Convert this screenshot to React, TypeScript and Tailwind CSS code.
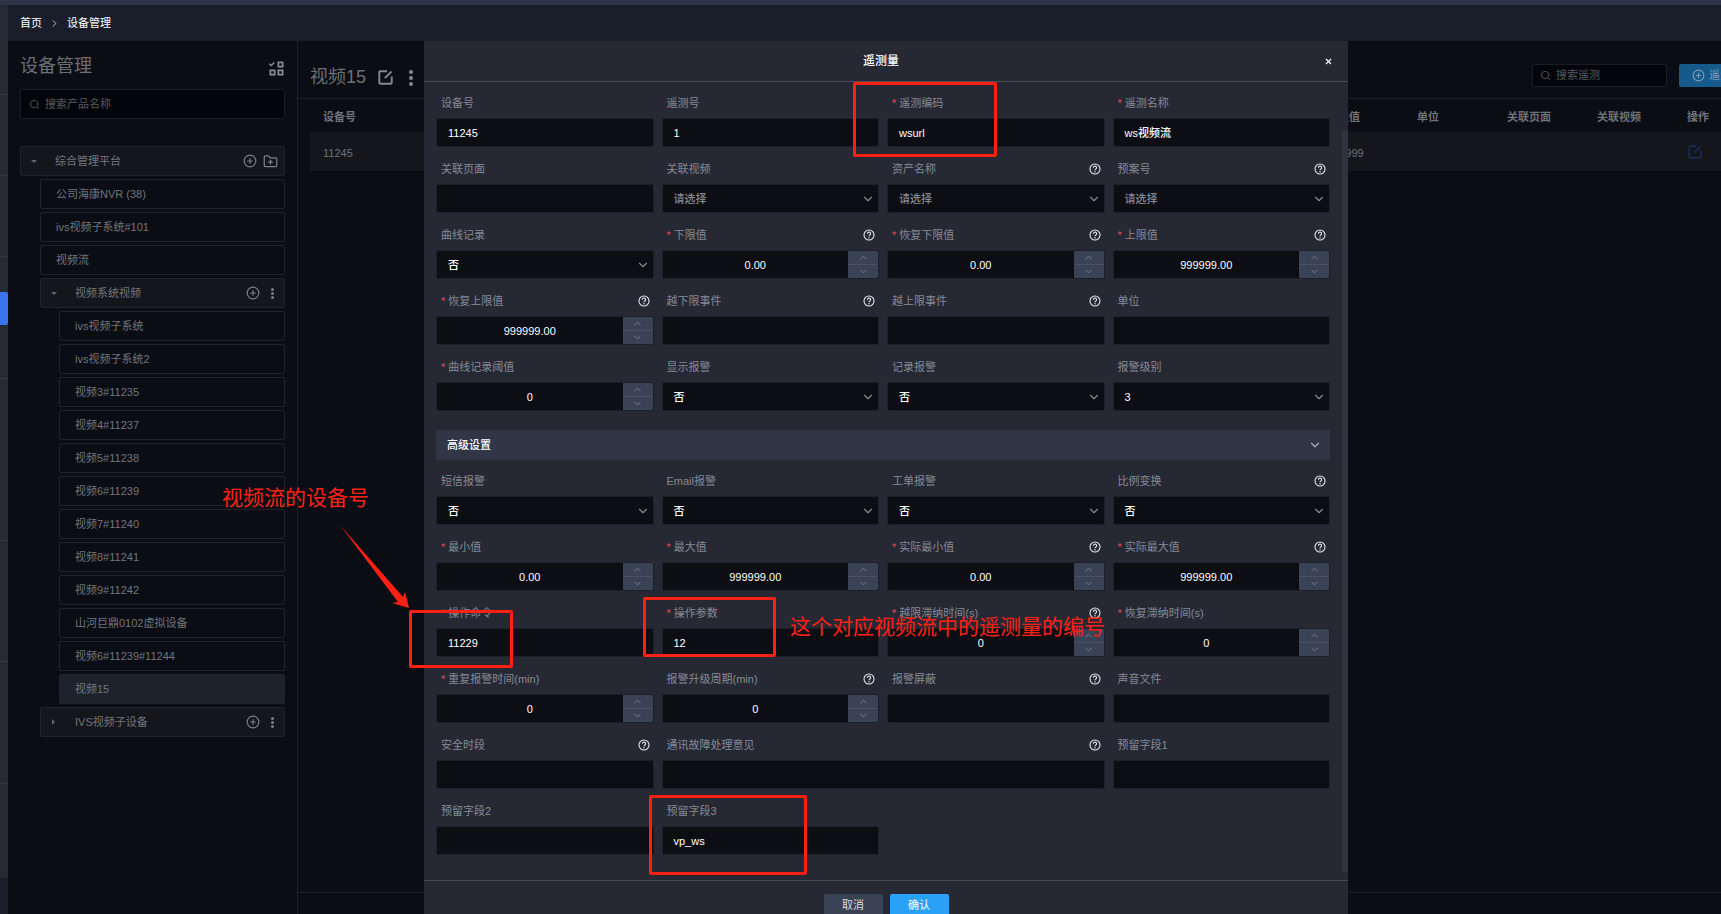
import { ChevronDown, ChevronUp, ChevronRight, CirclePlus, FolderPlus, Search, X } from 'lucide-react';

// Device management page, dimmed behind the telemetry dialog, with red review notes on top.

type Field = {
  label: string;
  req?: boolean;
  help?: boolean;
  kind?: 'input' | 'select' | 'number';
  value?: string;
  wide?: boolean;
};

const mainFields: Field[] = [
  { label: '设备号', value: '11245' },
  { label: '遥测号', value: '1' },
  { label: '遥测编码', req: true, value: 'wsurl' },
  { label: '遥测名称', req: true, value: 'ws视频流' },
  { label: '关联页面' },
  { label: '关联视频', kind: 'select' },
  { label: '资产名称', help: true, kind: 'select' },
  { label: '预案号', help: true, kind: 'select' },
  { label: '曲线记录', kind: 'select', value: '否' },
  { label: '下限值', req: true, help: true, kind: 'number', value: '0.00' },
  { label: '恢复下限值', req: true, help: true, kind: 'number', value: '0.00' },
  { label: '上限值', req: true, help: true, kind: 'number', value: '999999.00' },
  { label: '恢复上限值', req: true, help: true, kind: 'number', value: '999999.00' },
  { label: '越下限事件', help: true },
  { label: '越上限事件', help: true },
  { label: '单位' },
  { label: '曲线记录阈值', req: true, kind: 'number', value: '0' },
  { label: '显示报警', kind: 'select', value: '否' },
  { label: '记录报警', kind: 'select', value: '否' },
  { label: '报警级别', kind: 'select', value: '3' },
];

const advancedFields: Field[] = [
  { label: '短信报警', kind: 'select', value: '否' },
  { label: 'Email报警', kind: 'select', value: '否' },
  { label: '工单报警', kind: 'select', value: '否' },
  { label: '比例变换', help: true, kind: 'select', value: '否' },
  { label: '最小值', req: true, kind: 'number', value: '0.00' },
  { label: '最大值', req: true, kind: 'number', value: '999999.00' },
  { label: '实际最小值', req: true, help: true, kind: 'number', value: '0.00' },
  { label: '实际最大值', req: true, help: true, kind: 'number', value: '999999.00' },
  { label: '操作命令', req: true, value: '11229' },
  { label: '操作参数', req: true, value: '12' },
  { label: '越限滞纳时间(s)', req: true, help: true, kind: 'number', value: '0' },
  { label: '恢复滞纳时间(s)', req: true, kind: 'number', value: '0' },
  { label: '重复报警时间(min)', req: true, kind: 'number', value: '0' },
  { label: '报警升级周期(min)', help: true, kind: 'number', value: '0' },
  { label: '报警屏蔽', help: true },
  { label: '声音文件' },
  { label: '安全时段', help: true },
  { label: '通讯故障处理意见', help: true, wide: true },
  { label: '预留字段1' },
  { label: '预留字段2' },
  { label: '预留字段3', value: 'vp_ws' },
];

const videoNodes = [
  'ivs视频子系统',
  'ivs视频子系统2',
  '视频3#11235',
  '视频4#11237',
  '视频5#11238',
  '视频6#11239',
  '视频7#11240',
  '视频8#11241',
  '视频9#11242',
  '山河巨鼎0102虚拟设备',
  '视频6#11239#11244',
];

// collapsed nav rail: item heights, only the 5th is the active one
const railRows = [
  { h: 90, line: true },
  { h: 81, line: true },
  { h: 81, line: true },
  { h: 35 },
  { h: 33, active: true },
  { h: 54, line: true },
  { h: 162, line: true },
  { h: 121, line: true },
  { h: 122, line: true },
  { h: 94 },
];

function HelpIcon() {
  return (
    <svg width="12" height="12" viewBox="0 0 12 12" fill="none" className="shrink-0 text-[#e4e6ea]">
      <circle cx="6" cy="6" r="5" stroke="currentColor" strokeWidth="1.1" />
      <path d="M4.4 4.7a1.6 1.6 0 1 1 2.4 1.4c-.5.3-.8.6-.8 1.1" stroke="currentColor" strokeWidth="1.1" />
      <circle cx="6" cy="8.8" r=".7" fill="currentColor" />
    </svg>
  );
}

function EditIcon({ size, width, className }: { size: number; width: number; className: string }) {
  return (
    <svg width={size} height={size} viewBox="0 0 14 14" fill="none" stroke="currentColor" strokeWidth={width} className={className}>
      <path d="M8.5 1.2H2a.8.8 0 0 0-.8.8v10a.8.8 0 0 0 .8.8h10a.8.8 0 0 0 .8-.8V6" />
      <path d="M12.6 1.4 6.4 7.6" />
    </svg>
  );
}

function TreeDots() {
  return (
    <span className="flex flex-col items-center gap-[1px]">
      <i className="size-[3px] rounded-full bg-current" />
      <i className="size-[3px] rounded-full bg-current" />
      <i className="size-[3px] rounded-full bg-current" />
    </span>
  );
}

function Caret() {
  return <i className="block size-0 border-x-[3px] border-t-[3px] border-x-transparent border-t-[#63666e]" />;
}

function FormField({ field }: { field: Field }) {
  const { label, req, help, kind = 'input', value, wide } = field;
  return (
    <div className={`mb-[11px] ${wide ? 'col-span-2' : ''}`}>
      <div className="mb-[4px] flex h-[22px] items-center justify-between pl-[5px] pr-[4px] text-[#858994]">
        <span className="whitespace-nowrap">
          {req && <span className="mr-[3px] text-[#e5484d]">*</span>}
          {label}
        </span>
        {help && <HelpIcon />}
      </div>
      <div className="flex h-[29px] items-center overflow-hidden rounded-[2px] border border-[#1d2029] bg-[#0c0e14]">
        {kind === 'number' ? (
          <>
            <span className="flex-1 pt-[1px] text-center font-medium text-white">{value}</span>
            <span className="flex h-full w-[30px] flex-col bg-[#3a4255] text-[#7f8696]">
              <span className="flex flex-1 items-center justify-center border-b border-[#4a5265]">
                <ChevronUp size={11} />
              </span>
              <span className="flex flex-1 items-center justify-center">
                <ChevronDown size={11} />
              </span>
            </span>
          </>
        ) : (
          <>
            <span className={`flex-1 pl-[11px] pt-[1px] font-medium ${value ? 'text-white' : 'text-[#858994]'}`}>
              {value ?? (kind === 'select' ? '请选择' : '')}
            </span>
            {kind === 'select' && <ChevronDown size={14} className="mr-[3px] text-[#858994]" />}
          </>
        )}
      </div>
    </div>
  );
}

function TreeRow({
  label,
  className,
  group,
  children,
}: {
  label: string;
  className: string;
  group?: boolean;
  children?: React.ReactNode;
}) {
  return (
    <div className={`flex h-[30px] items-center rounded-[2px] border border-[#20232b] text-[#72757d] ${className}`}>
      {group && (
        <span className="flex w-[34px] shrink-0 pl-[10px]">
          <Caret />
        </span>
      )}
      <span className="flex-1 whitespace-nowrap">{label}</span>
      {children}
    </div>
  );
}

function GroupActions() {
  return (
    <span className="mr-[10px] flex items-center gap-[11px] text-[#7c7f86]">
      <CirclePlus size={14} />
      <TreeDots />
    </span>
  );
}

function Sidebar() {
  return (
    <aside className="w-[290px] shrink-0 border-r border-[#1c1f27] px-[12px]">
      <div className="flex h-[48px] items-center justify-between pr-[1px] pt-[3px]">
        <span className="text-[18px] text-[#6c6f76]">设备管理</span>
        <svg width="15" height="15" viewBox="0 0 15 15" className="mt-[3px] text-[#8a8d94]" fill="currentColor">
          <path d="M.8 2.2 2.2 3.6 4.8.9l1 1-3.6 3.6L-.2 3.2z" />
          <path fillRule="evenodd" d="M8.5.5h6v6h-6zM10.2 2.2v2.6h2.6V2.2zM.5 8.5h6v6h-6zM2.2 10.2v2.6h2.6v-2.6zM8.5 8.5h6v6h-6zM10.2 10.2v2.6h2.6v-2.6z" />
        </svg>
      </div>
      <div className="flex h-[30px] items-center gap-[5px] rounded-[2px] border border-[#1a1c22] bg-[#04050a] pl-[8px] text-[#55585f]">
        <Search size={11} />
        搜索产品名称
      </div>
      <div className="mt-[27px] flex flex-col gap-[3px]">
        <TreeRow label="综合管理平台" group className="bg-[#14161c]">
          <span className="mr-[6px] flex items-center gap-[6px] text-[#7c7f86]">
            <CirclePlus size={14} />
            <FolderPlus size={15} />
          </span>
        </TreeRow>
        <div className="ml-[20px] flex flex-col gap-[3px]">
          <TreeRow label="公司海康NVR (38)" className="pl-[15px]" />
          <TreeRow label="ivs视频子系统#101" className="pl-[15px]" />
          <TreeRow label="视频流" className="pl-[15px]" />
          <TreeRow label="视频系统视频" group className="bg-[#14161c]">
            <GroupActions />
          </TreeRow>
          <div className="ml-[19px] flex flex-col gap-[3px]">
            {videoNodes.map((name) => (
              <TreeRow key={name} label={name} className="pl-[15px]" />
            ))}
            <TreeRow label="视频15" className="bg-[#1e222d] pl-[15px]" />
          </div>
          <div className="flex h-[30px] items-center rounded-[2px] border border-[#20232b] bg-[#14161c] text-[#72757d]">
            <span className="flex w-[34px] shrink-0 pl-[11px]">
              <i className="block size-0 border-y-[3px] border-l-[3px] border-y-transparent border-l-[#63666e]" />
            </span>
            <span className="flex-1">IVS视频子设备</span>
            <GroupActions />
          </div>
        </div>
      </div>
    </aside>
  );
}

function MainPanel() {
  return (
    <main className="flex min-w-0 flex-1 flex-col">
      <div className="flex h-[58px] shrink-0 items-center border-b border-[#1c1f27] pl-[12px] pt-[16px]">
        <span className="text-[18px] text-[#6c6f76]">视频15</span>
        <EditIcon size={15} width={1.8} className="ml-[12px] text-[#85888f]" />
        <span className="ml-[16px] flex flex-col items-center gap-[2px] text-[#85888f]">
          <i className="size-[4px] rounded-full bg-current" />
          <i className="size-[4px] rounded-full bg-current" />
          <i className="size-[4px] rounded-full bg-current" />
        </span>
        <div className="mb-[4px] ml-auto flex h-[23px] w-[135px] items-center gap-[5px] rounded-[2px] border border-[#1a1c22] bg-[#04050a] pl-[7px] text-[#55585f]">
          <Search size={11} />
          搜索遥测
        </div>
        <div className="mb-[4px] ml-[12px] flex h-[23px] w-[42px] items-center gap-[4px] overflow-hidden rounded-l-[2px] bg-[#155a8a] pl-[13px] whitespace-nowrap text-[#7f9db5]">
          <CirclePlus size={13} className="shrink-0" />
          遥测
        </div>
      </div>
      <div className="flex h-[33px] shrink-0 items-center pl-[25px] pt-[3px] font-bold text-[#6f7279]">
        <span className="w-[1004px]">设备号</span>
        <span className="w-[90px]">上限值</span>
        <span className="w-[90px]">单位</span>
        <span className="w-[90px]">关联页面</span>
        <span className="w-[90px]">关联视频</span>
        <span>操作</span>
      </div>
      <div className="ml-[12px] flex h-[39px] shrink-0 items-center bg-[#14161c] pl-[13px] pt-[3px] text-[#6f7279]">
        <span className="w-[1004px]">11245</span>
        <span className="w-[361px]">999999</span>
        <EditIcon size={14} width={1.2} className="mb-[3px] text-[#1c3370]" />
      </div>
      <div className="flex-1" />
      <div className="h-[22px] shrink-0 border-t border-[#1c1f27]" />
    </main>
  );
}

function Dialog() {
  return (
    <div className="absolute left-[424px] top-[41px] flex h-[873px] w-[924px] flex-col overflow-hidden bg-[#262934]">
      <div className="flex h-[41px] shrink-0 items-center border-b border-[#4a4d58]">
        <span className="flex-1 pl-[14px] text-center text-[12px] font-medium text-white">遥测量</span>
        <X size={9} strokeWidth={3} className="mr-[15px] text-white" />
      </div>
      <div className="relative min-h-0 flex-1 overflow-hidden pl-[12px] pt-[10px]">
        <div className="grid w-[894px] grid-cols-4 gap-x-[8px]">
          {mainFields.map((f) => (
            <FormField key={f.label} field={f} />
          ))}
        </div>
        <div className="mb-[10px] mt-[8px] flex h-[30px] w-[894px] items-center justify-between bg-[#313647] pl-[11px] pr-[8px] font-medium text-white">
          高级设置
          <ChevronDown size={14} className="text-[#aab0bd]" />
        </div>
        <div className="grid w-[894px] grid-cols-4 gap-x-[8px]">
          {advancedFields.map((f) => (
            <FormField key={f.label} field={f} />
          ))}
        </div>
        <div className="absolute right-0 top-[48px] h-[743px] w-[6px] rounded-full bg-[#30343f]" />
      </div>
      <div className="flex h-[34px] shrink-0 justify-center gap-[7px] border-t border-[#4a4d58] pt-[13px]">
        <span className="flex h-[22px] w-[59px] items-center justify-center rounded-t-[2px] bg-[#3a4255] text-[#d8dbe2]">取消</span>
        <span className="flex h-[22px] w-[59px] items-center justify-center rounded-t-[2px] bg-[#29a1f7] text-white">确认</span>
      </div>
    </div>
  );
}

function Notes() {
  return (
    <>
      <div className="absolute left-[853px] top-[82px] h-[75px] w-[144px] rounded-[2px] border-[3px] border-[#ff2014]" />
      <div className="absolute left-[409px] top-[610px] h-[58px] w-[104px] rounded-[2px] border-[3px] border-[#ff2014]" />
      <div className="absolute left-[643px] top-[597px] h-[60px] w-[133px] rounded-[2px] border-[3px] border-[#ff2014]" />
      <div className="absolute left-[649px] top-[795px] h-[80px] w-[158px] rounded-[2px] border-[3px] border-[#ff2014]" />
      <div className="absolute left-[222px] top-[483px] whitespace-nowrap text-[21px] leading-[30px] text-[#ff2014]">视频流的设备号</div>
      <div className="absolute left-[790px] top-[612px] whitespace-nowrap text-[21px] leading-[30px] text-[#ff2014]">这个对应视频流中的遥测量的编号</div>
      <svg className="absolute left-[335px] top-[520px]" width="80" height="95" viewBox="335 520 80 95">
        <polygon points="340,525 403,597 405,592 409,608 392,603 398,602" fill="#ff2014" />
      </svg>
    </>
  );
}

export default function App() {
  return (
    <div className="relative h-[914px] w-[1721px] overflow-hidden bg-[#0a0d14] font-['Liberation_Sans','Noto_Sans_CJK_SC',sans-serif] text-[11px]">
      <div className="h-[5px] bg-[#2f3548]" />
      <div className="flex h-[909px]">
        <div className="w-[8px] shrink-0 bg-[#1a1e2b]">
          {railRows.map((row, i) => (
            <div
              key={i}
              style={{ height: row.h }}
              className={`${row.line ? 'border-b border-[#343844]' : ''} ${row.active ? 'rounded-r-[2px] bg-[#3b74f0]' : 'bg-[#262a35]'}`}
            />
          ))}
        </div>
        <div className="flex min-w-0 flex-1 flex-col">
          <div className="flex h-[36px] shrink-0 items-center gap-[7px] bg-[#1a1e2b] pl-[12px] text-white">
            首页
            <ChevronRight size={11} className="text-[#c0c3ca]" />
            设备管理
          </div>
          <div className="flex min-h-0 flex-1">
            <Sidebar />
            <MainPanel />
          </div>
        </div>
      </div>
      <Dialog />
      <Notes />
    </div>
  );
}
